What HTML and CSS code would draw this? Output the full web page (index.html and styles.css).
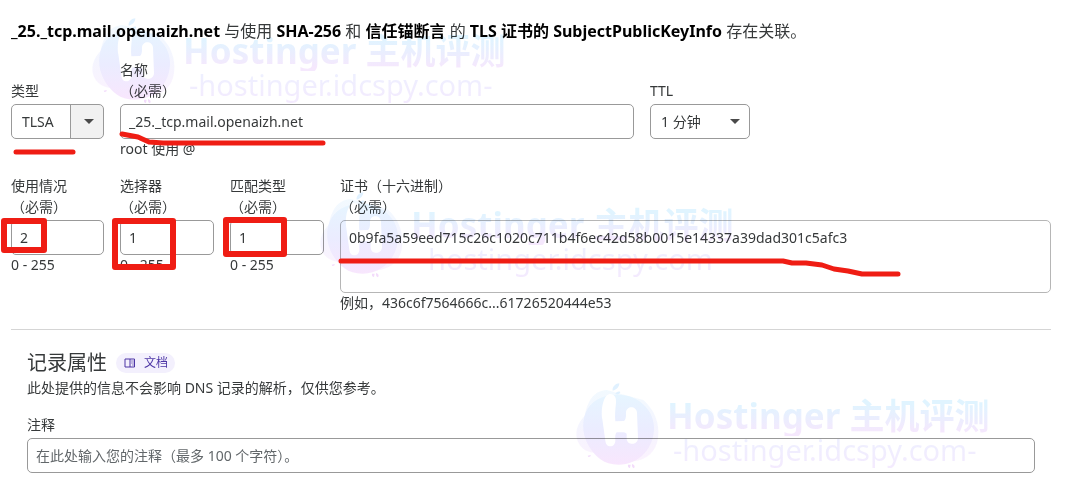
FILE: index.html
```html
<!DOCTYPE html>
<html lang="zh-CN">
<head>
    <meta charset="UTF-8">
    <meta name="viewport" content="width=device-width, initial-scale=1.0">
    <title>DNS 记录</title>
    <link rel="stylesheet" href="styles.css">
</head>
<body>

    <!-- Shared watermark logo -->
    <svg class="defs" width="0" height="0" aria-hidden="true">
        <defs>
            <linearGradient id="wm-fill" x1="0" y1="0" x2="0" y2="1">
                <stop offset="0" stop-color="#e6f5ff"/>
                <stop offset="0.5" stop-color="#ebecff"/>
                <stop offset="1" stop-color="#f8e6fd"/>
            </linearGradient>
            <symbol id="wm-logo" viewBox="45 38 255 264">
                <path fill="url(#wm-fill)" opacity="0.5" d="M140 62C100 64 82 98 74 140C56 158 46 182 50 205C56 236 82 248 100 250L220 276C262 272 290 244 294 206C300 160 282 120 250 92Z"/>
                <path fill="url(#wm-fill)" d="M172 76C230 74 280 118 282 172C284 236 236 286 176 286C130 286 108 262 90 236C70 206 62 164 78 128C92 96 124 76 172 76Z"/>
                <path fill="#fff" d="M148 74C162 72 170 84 168 100C166 120 164 138 166 156L192 155C196 152 198 146 198 138V130C198 108 230 108 231 130L234 206C234 228 202 230 200 208V194C198 188 192 188 170 189C166 194 165 200 166 212C167 236 138 238 136 214L127 150C122 120 130 78 148 74Z"/>
                <path fill="#e0f1ff" d="M158 64C156 52 168 42 178 42C178 52 170 62 158 64ZM166 74C168 68 176 65 181 68C180 74 173 77 166 74Z"/>
                <path fill="#f3dcfb" d="M83 259A4 4 0 1 0 92 257ZM204 286L212 286L210 296C205 295 203 291 204 286ZM216 284C224 286 226 292 222 297C217 295 215 290 216 284Z"/>
            </symbol>
        </defs>
    </svg>

    <main class="page">
        <p class="summary"><b>_25._tcp.mail.openaizh.net</b> 与使用 <b>SHA-256</b> 和 <b>信任锚断言</b> 的 <b>TLS 证书的 SubjectPublicKeyInfo</b> 存在关联。</p>

        <form>
            <!-- Type / name / TTL -->
            <div class="row row-name">
                <div class="field">
                    <label for="type">类型</label>
                    <div class="select select-split">
                        <select id="type"><option>TLSA</option></select>
                    </div>
                </div>
                <div class="field">
                    <label for="name">名称<span>（必需）</span></label>
                    <input type="text" id="name" value="_25._tcp.mail.openaizh.net">
                    <p class="help">root 使用 @</p>
                </div>
                <div class="field">
                    <label for="ttl">TTL</label>
                    <div class="select">
                        <select id="ttl"><option>1 分钟</option></select>
                    </div>
                </div>
            </div>

            <!-- TLSA data -->
            <div class="row row-data">
                <div class="field">
                    <label for="usage">使用情况<span>（必需）</span></label>
                    <input type="text" id="usage" value="2">
                    <p class="help">0 - 255</p>
                </div>
                <div class="field">
                    <label for="selector">选择器<span>（必需）</span></label>
                    <input type="text" id="selector" value="1">
                    <p class="help">0 - 255</p>
                </div>
                <div class="field">
                    <label for="matching">匹配类型<span>（必需）</span></label>
                    <input type="text" id="matching" value="1">
                    <p class="help">0 - 255</p>
                </div>
                <div class="field">
                    <label for="cert">证书（十六进制）<span>（必需）</span></label>
                    <textarea id="cert">0b9fa5a59eed715c26c1020c711b4f6ec42d58b0015e14337a39dad301c5afc3</textarea>
                    <p class="help">例如，436c6f7564666c...61726520444e53</p>
                </div>
            </div>

            <!-- Record attributes -->
            <section class="attributes">
                <div class="heading">
                    <h2>记录属性</h2>
                    <a class="docs" href="#">
                        <svg width="12" height="10" viewBox="0 0 12 10" fill="none" stroke="currentColor" aria-hidden="true">
                            <path d="M1 1H6V9H1ZM6 1H10.500V9H6"/>
                            <path opacity="0.6" d="M7 3H10M7 5H10M8 7H10"/>
                        </svg>
                        文档
                    </a>
                </div>
                <p class="intro">此处提供的信息不会影响 DNS 记录的解析，仅供您参考。</p>
                <div class="field">
                    <label class="short" for="comment">注释</label>
                    <input type="text" id="comment" placeholder="在此处输入您的注释（最多 100 个字符）。">
                </div>
            </section>
        </form>
    </main>

    <!-- Watermarks -->
    <div class="watermark wm-1">
        <svg class="logo" aria-hidden="true"><use href="#wm-logo"/></svg>
        <div>
            <div class="wm-title">Hostinger 主机评测</div>
            <div class="wm-url">-hostinger.idcspy.com-</div>
        </div>
    </div>
    <div class="watermark wm-2">
        <svg class="logo" aria-hidden="true"><use href="#wm-logo"/></svg>
        <div>
            <div class="wm-title">Hostinger 主机评测</div>
            <div class="wm-url">hostinger.idcspy.com</div>
        </div>
    </div>
    <div class="watermark wm-3">
        <svg class="logo" aria-hidden="true"><use href="#wm-logo"/></svg>
        <div>
            <div class="wm-title">Hostinger 主机评测</div>
            <div class="wm-url">-hostinger.idcspy.com-</div>
        </div>
    </div>

    <!-- Red pen marks -->
    <svg class="marks" width="920" height="290" viewBox="0 0 920 290" aria-hidden="true">
        <path d="M16 152H45L73 152"/>
        <path d="M122 134L138 137L149 142L163 143H323"/>
        <path d="M341 261H783L792 263L806 263L822 265L834 269L848 271L862 274H898"/>
        <rect x="4" y="221" width="40" height="29"/>
        <rect x="115" y="221" width="58" height="46"/>
        <rect x="226" y="220" width="58" height="34"/>
    </svg>

</body>
</html>
```

FILE: styles.css
```css
* {
    box-sizing: border-box;
}

body {
    position: relative;
    margin: 0;
    background: #fff;
    color: #36393a;
    font-family: "Noto Sans", "Noto Sans CJK SC", sans-serif;
    font-size: 14px;
    line-height: 21px;
}

p, h2 {
    margin: 0;
}

.defs {
    position: absolute;
}

.page {
    padding: 19px 20px 15px 11px;
}

.summary {
    margin-bottom: 16px;
    font-size: 16px;
    line-height: 24px;
}

.summary b {
    color: #000;
}

/* Form rows */
.row {
    display: grid;
    column-gap: 16px;
}

.row-name {
    grid-template-columns: 93fr 514fr 100fr 285fr;
    margin-bottom: 16px;
}

.row-data {
    grid-template-columns: 93fr 94fr 94fr 711fr;
}

.field {
    min-width: 0;
}

label {
    display: flex;
    flex-direction: column;
    justify-content: flex-end;
    min-height: 42px;
    margin-bottom: 3px;
}

label.short {
    min-height: 21px;
}

input, select, textarea {
    display: block;
    width: 100%;
    height: 35px;
    padding: 0 8px;
    border: 1px solid #999;
    border-radius: 5px;
    background: #fff;
    color: #36393a;
    font: inherit;
    outline: none;
}

textarea {
    height: 73px;
    padding: 6px 8px;
    border-color: #b6b6b6;
    resize: none;
}

input::placeholder {
    color: #62676a;
    opacity: 1;
}

.help {
    line-height: 20px;
}

/* Drop-downs */
.select {
    position: relative;
}

.select select {
    padding: 0 10px;
    appearance: none;
}

.select-split select {
    background: linear-gradient(to left, #f1f1f1 32px, #999 32px, #999 33px, #fff 33px);
}

.select::after {
    content: "";
    position: absolute;
    top: 15px;
    right: 10px;
    border: 5px solid transparent;
    border-top-color: #4a4a4a;
    border-bottom: 0;
    pointer-events: none;
}

/* Record attributes */
.attributes {
    margin-top: 16px;
    padding: 19px 16px 0;
    border-top: 1px solid #d5d5d5;
}

.heading {
    display: flex;
    align-items: center;
    gap: 9px;
}

h2 {
    font-size: 20px;
    font-weight: 400;
    line-height: 28px;
}

.docs {
    display: flex;
    align-items: center;
    gap: 8px;
    padding: 0 7px 0 8px;
    border-radius: 10px;
    background: #f3f0fd;
    color: #4c35a5;
    font-size: 12px;
    line-height: 20px;
    text-decoration: none;
}

.intro {
    margin-bottom: 16px;
}

/* Watermarks */
.watermark {
    position: absolute;
    display: flex;
    gap: 7px;
    white-space: nowrap;
    pointer-events: none;
    mix-blend-mode: multiply;
}

.wm-1 {
    left: 91px;
    top: 17px;
}

.wm-2 {
    left: 319px;
    top: 191px;
}

.wm-3 {
    left: 575px;
    top: 382px;
}

.logo {
    width: 85px;
    height: 88px;
}

.wm-title, .wm-url {
    background: linear-gradient(#e0f4ff 20%, #f5e8fd 90%);
    background-clip: text;
    color: transparent;
}

.wm-title {
    margin-top: 14px;
    font-size: 35px;
    font-weight: 700;
    line-height: 40px;
}

.wm-url {
    margin-top: -6px;
    padding-left: 6px;
    background-image: linear-gradient(#ecf1ff, #f4eafe);
    font-size: 29px;
    line-height: 40px;
}

.wm-2 .wm-url {
    padding-left: 17px;
}

/* Pen marks */
.marks {
    position: absolute;
    left: 0;
    top: 0;
    fill: none;
    stroke: #ef1d14;
    stroke-width: 5px;
    stroke-linecap: round;
    stroke-linejoin: round;
    pointer-events: none;
}

.marks rect {
    stroke-width: 6px;
}
```
